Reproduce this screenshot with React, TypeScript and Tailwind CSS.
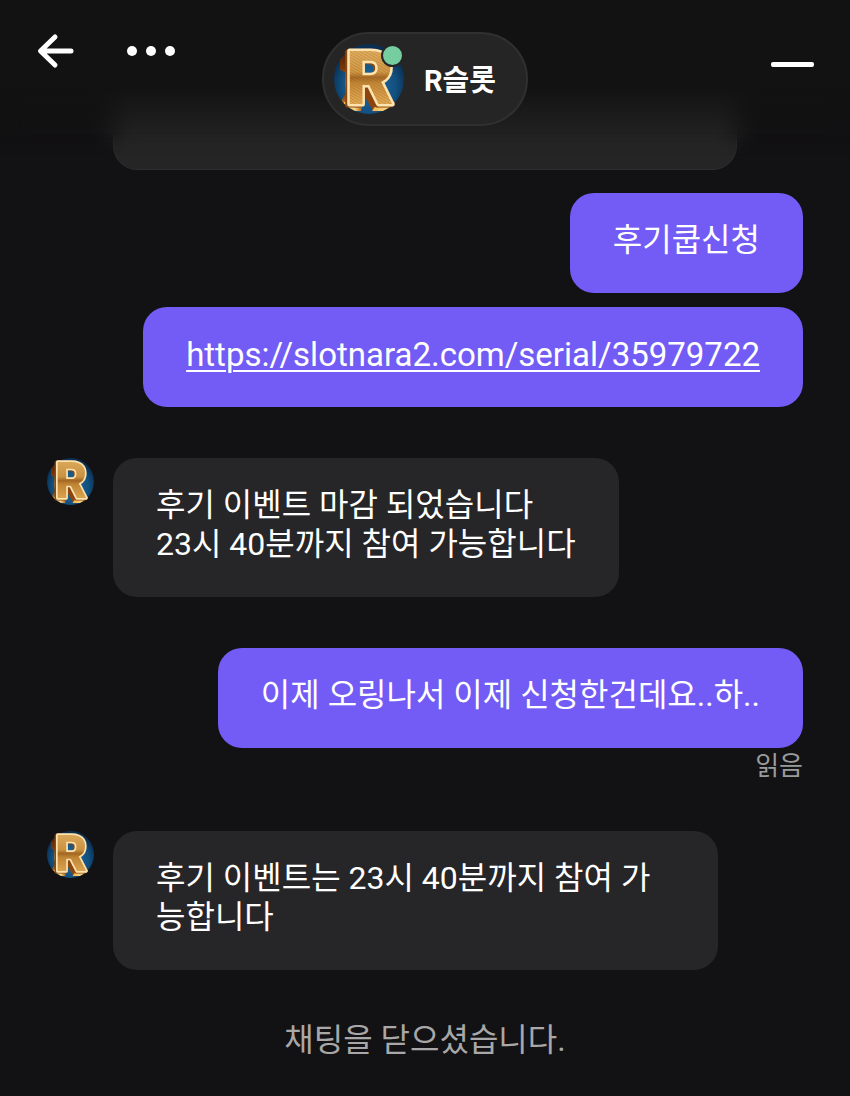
import React, { useId } from 'react';

interface Message {
  id: number;
  sender: 'user' | 'agent';
  lines: string[];
  href?: string;
  read?: boolean;
}

const messages: Message[] = [
  { id: 1, sender: 'user', lines: ['후기쿱신청'] },
  {
    id: 2,
    sender: 'user',
    lines: ['https://slotnara2.com/serial/35979722'],
    href: 'https://slotnara2.com/serial/35979722',
  },
  { id: 3, sender: 'agent', lines: ['후기 이벤트 마감 되었습니다', '23시 40분까지 참여 가능합니다'] },
  { id: 4, sender: 'user', lines: ['이제 오링나서 이제 신청한건데요..하..'], read: true },
  { id: 5, sender: 'agent', lines: ['후기 이벤트는 23시 40분까지 참여 가능합니다'] },
];

const Avatar: React.FC<{ className: string }> = ({ className }) => {
  const id = useId();

  return (
    <svg viewBox="0 0 70 70" className={`overflow-visible ${className}`} aria-hidden="true">
      <defs>
        <radialGradient id={`${id}bg`} cx="50%" cy="60%" r="55%">
          <stop offset="0" stopColor="#1f6fa6" />
          <stop offset="0.7" stopColor="#12507f" />
          <stop offset="1" stopColor="#0b2f52" />
        </radialGradient>
        <linearGradient id={`${id}gold`} x1="0" y1="0" x2="0" y2="1">
          <stop offset="0.08" stopColor="#e8b564" />
          <stop offset="0.4" stopColor="#d59d48" />
          <stop offset="0.48" stopColor="#a86c26" />
          <stop offset="0.56" stopColor="#c98c38" />
          <stop offset="0.86" stopColor="#e9b25a" />
        </linearGradient>
        <linearGradient id={`${id}side`} x1="0" y1="0" x2="0" y2="1">
          <stop offset="0" stopColor="#4a1d06" />
          <stop offset="0.35" stopColor="#7a3a0c" />
          <stop offset="0.6" stopColor="#e09a34" />
          <stop offset="0.75" stopColor="#6b2f0a" />
          <stop offset="1" stopColor="#c98228" />
        </linearGradient>
        <linearGradient id={`${id}foot`} x1="0" y1="0" x2="1" y2="0">
          <stop offset="0" stopColor="#f0b650" />
          <stop offset="0.6" stopColor="#ffd984" />
          <stop offset="1" stopColor="#9a5414" />
        </linearGradient>
        <pattern id={`${id}hatch`} width="2.5" height="2.5" patternUnits="userSpaceOnUse" patternTransform="rotate(30)">
          <path d="M0 1H2.500" stroke="#82501a" strokeWidth="0.7" />
        </pattern>
        <pattern id={`${id}face`} width="70" height="70" patternUnits="userSpaceOnUse">
          <rect width="70" height="70" fill={`url(#${id}gold)`} />
          <rect width="70" height="70" fill={`url(#${id}hatch)`} opacity="0.5" />
        </pattern>
        <clipPath id={`${id}clip`}>
          <circle cx="35" cy="35" r="35" />
        </clipPath>
      </defs>
      <circle cx="35" cy="35" r="35" fill={`url(#${id}bg)`} />
      {/* Side and foot faces of the raised letter */}
      <g clipPath={`url(#${id}clip)`}>
        <path d="M13 7L6 16V26L11 28V50L7 58V62L12 60Z" fill={`url(#${id}side)`} />
        <path d="M27 42L34 42L46 60L40 68L28 48Z" fill="#8c4510" />
        <path d="M10 58H29L27 67H7Z" fill={`url(#${id}foot)`} />
        <path d="M44 58H63L55 67H38Z" fill={`url(#${id}foot)`} />
      </g>
      <text
        x="36"
        y="60"
        fill={`url(#${id}face)`}
        stroke="#ffe3ae"
        strokeWidth="5"
        strokeLinejoin="round"
        paintOrder="stroke"
        fontFamily="Roboto, sans-serif"
        fontWeight="900"
        fontSize="74"
        textAnchor="middle"
        className="drop-shadow-[-2px_1px_0_#8a4710]"
      >
        R
      </text>
    </svg>
  );
};

const Header: React.FC = () => (
  <header className="absolute inset-x-0 top-0 z-10">
    <div className="pointer-events-none absolute inset-x-0 top-0 h-[156px] backdrop-blur-md [mask-image:linear-gradient(#000_85%,transparent)]" />
    <div className="pointer-events-none absolute inset-x-0 top-0 h-[144px] bg-linear-to-b from-[#121212] from-60% to-transparent" />

    <div className="relative flex items-start justify-between px-9 pt-8">
      <div className="flex flex-1 items-center gap-12">
        <button type="button" aria-label="뒤로">
          <svg viewBox="0 0 40 40" className="h-10 w-10" fill="none" stroke="#fff" strokeWidth="5" strokeLinecap="round" strokeLinejoin="round">
            <path d="M35 19H5M19 5L4.500 19L19 33" />
          </svg>
        </button>
        <button type="button" aria-label="메뉴">
          <svg viewBox="0 0 54 40" className="h-10 w-[54px]" fill="#fff">
            <circle cx="8" cy="19" r="5" />
            <circle cx="27" cy="19" r="5" />
            <circle cx="46" cy="19" r="5" />
          </svg>
        </button>
      </div>

      <div className="flex h-[94px] w-[206px] items-center gap-5 rounded-full border-2 border-[#303030] bg-[#252525] pl-[10px]">
        <div className="relative">
          <Avatar className="h-[70px] w-[70px]" />
          <span className="absolute top-0 right-0 h-[23px] w-[23px] rounded-full border-2 border-[#252525] bg-[#75cda0]" />
        </div>
        <h1 className="pt-1 text-[29px] leading-9 font-bold text-white">R슬롯</h1>
      </div>

      <div className="flex flex-1 justify-end">
        <button type="button" aria-label="최소화" className="py-[30px]">
          <span className="block h-[5px] w-[43px] rounded-xs bg-white" />
        </button>
      </div>
    </div>
  </header>
);

const MessageRow: React.FC<{ message: Message }> = ({ message }) => {
  const text = message.lines.map((line) => (
    <span key={line} className="block">
      {line}
    </span>
  ));

  if (message.sender === 'agent') {
    return (
      <li className="my-[37px] flex items-start gap-[19px]">
        <Avatar className="h-[47px] w-[47px] shrink-0" />
        <div className="max-w-[605px] rounded-3xl bg-[#262527] px-[43px] pt-7 pb-[33px]">{text}</div>
      </li>
    );
  }

  return (
    <li className="flex flex-col items-end">
      <div className="rounded-3xl bg-[#725cf5] px-[43px] pt-7 pb-[33px]">
        {message.href ? (
          <a href={message.href} className="block text-[33px] underline decoration-2 underline-offset-4">
            {message.lines[0]}
          </a>
        ) : (
          text
        )}
      </div>
      {message.read && <span className="-mb-1 text-[26px] leading-9 text-[#9b9b9b]">읽음</span>}
    </li>
  );
};

const App: React.FC = () => {
  return (
    <div className="relative min-h-screen bg-[#121113] font-['Roboto','Noto_Sans_CJK_KR',sans-serif] text-white">
      <Header />
      <main className="px-[47px] pt-[60px]">
        {/* Tail of the previous agent message */}
        <div className="ml-[66px] h-[110px] max-w-[624px] rounded-3xl border border-[#2d2d2d] bg-[#252525]" />
        <ul className="mt-[23px] flex flex-col gap-[14px] text-[32px] leading-[39px]">
          {messages.map((message) => (
            <MessageRow key={message.id} message={message} />
          ))}
        </ul>
        <p className="pt-[14px] pb-9 text-center text-[32px] leading-[39px] text-[#a9a7a8]">채팅을 닫으셨습니다.</p>
      </main>
    </div>
  );
};

export default App;
